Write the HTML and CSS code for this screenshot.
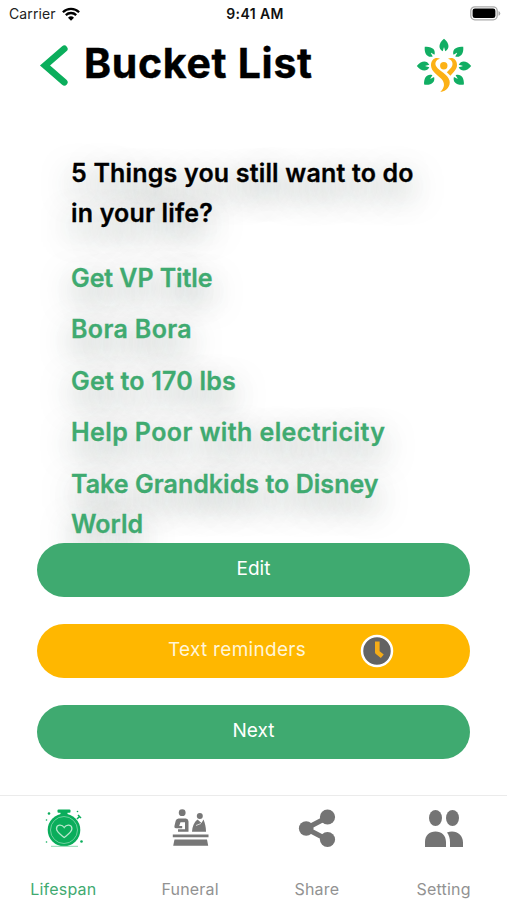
FILE: index.html
```html
<!DOCTYPE html>
<html lang="en">
<head>
<meta charset="utf-8">
<title>Bucket List</title>
<link rel="stylesheet" href="styles.css">
</head>
<body>
<div class="status">
  <div class="carrier"><span>Carrier</span>
    <svg width="18" height="14" viewBox="0 0 18 14" fill="none" stroke="#000" stroke-width="2.3"><path d="M.9 5.200a11.600 11.600 0 0 1 16.200 0M3.800 8.100a7.500 7.500 0 0 1 10.400 0"/><path d="M9 13.800 6 10.800a4.300 4.300 0 0 1 6 0z" fill="#000" stroke="none"/></svg>
  </div>
  <span class="time">9:41 AM</span>
  <svg class="battery" width="31" height="15" viewBox="0 0 31 15"><rect x=".8" y=".8" width="26.4" height="13" rx="4" fill="#fff" stroke="#aaa" stroke-width="1.3"/><rect x="2.6" y="2.5" width="22.8" height="9.6" rx="2.3"/><path d="M28.500 5v4.800q1.800-.8 1.800-2.400T28.500 5" fill="#aaa"/></svg>
</div>
<header class="header">
  <svg class="back" width="30" height="42" viewBox="0 0 30 42" fill="none" stroke="#0bae5c" stroke-width="6.6" stroke-linecap="round" stroke-linejoin="miter"><path d="M25.300 3.800 6 20.500 25.300 37.300"/></svg>
  <h1>Bucket List</h1>
  <svg class="logo" width="56" height="56" viewBox="0 0 56 56">
    <defs><path id="leaf" d="M0-27.200C-5.800-22.500-5.800-17-1.200-14.700L-.2-18.500h.4L1.200-14.700C5.800-17 5.800-22.500 0-27.200z" fill="#11ae63"/></defs>
    <g transform="translate(28 28)"><use href="#leaf"/><use href="#leaf" transform="rotate(-45)"/><use href="#leaf" transform="rotate(45)"/><use href="#leaf" transform="rotate(-90)"/><use href="#leaf" transform="rotate(90)"/><use href="#leaf" transform="rotate(-133)"/><use href="#leaf" transform="rotate(133)"/></g>
    <circle cx="27.800" cy="27.800" r="3.700" fill="#fcb116"/>
    <path d="M24 20.800C20 18.500 14.800 21 15 27.500c.3 6 5.500 8.500 10 13 4.200 4.200 4 9-.7 13.500 6.500-.8 10.500-6 9.200-11.500-1.700-6.500-10.300-9.500-13.200-14-2-3.300-.3-7 3.700-7.700z" fill="#fcb116"/>
    <path d="M32 20.800c3.700.7 5.300 4 4.200 7-.8 2.300-3.600 4.500-5.400 6.500l3.600 3.500c3-3.500 6.400-6.300 6.600-10.300.3-6.500-5-9-9-6.700z" fill="#fcb116"/>
  </svg>
</header>
<main class="goals">
  <h2><span>5 Things you still want to do</span><br><span>in your life?</span></h2>
  <ul>
    <li class="g1">Get VP Title</li>
    <li class="g2">Bora Bora</li>
    <li class="g3">Get to 170 lbs</li>
    <li class="g4">Help Poor with electricity</li>
    <li class="g5">Take Grandkids to Disney<br>World</li>
  </ul>
</main>
<div class="actions">
  <button class="btn">Edit</button>
  <button class="btn remind"><span>Text reminders</span>
    <svg class="clock" width="34" height="34" viewBox="0 0 34 34"><circle cx="17" cy="17" r="15" fill="#636363" stroke="#fff" stroke-width="2.500"/><path d="M17.300 7.500V18.300l5 4" fill="none" stroke="#f4ac18" stroke-width="4.600" stroke-linejoin="round"/></svg>
  </button>
  <button class="btn">Next</button>
</div>
<nav class="tabs">
  <a class="tab active">
    <svg width="42" height="42" viewBox="0 0 42 42" fill="#0aad5b"><rect x="15.500" y="1.500" width="13" height="3.200" rx="1"/><rect x="18.500" y="4" width="7" height="4"/><path d="m35 11 3-3m-2-1 3 3" stroke="#0aad5b" stroke-width="1.500"/><circle cx="22" cy="22" r="16.300"/><circle cx="22" cy="22" r="13.500" fill="none" stroke="#6fcf9e" stroke-width="1"/><path d="M22.200 29.500c-3-2.500-7.700-5.500-7.700-8.800 0-4.500 5.500-4.500 7.700-1.200 2.200-3.300 7.700-3.300 7.700 1.200 0 3.300-4.700 6.300-7.700 8.800z" fill="none" stroke="#b5e8cc" stroke-width="1.300"/><circle cx="7" cy="5.500" r="1.300"/><circle cx="4.500" cy="12" r=".8"/><circle cx="35.500" cy="3.500" r=".8"/><circle cx="39.500" cy="33.500" r="1.300"/><circle cx="4.500" cy="34" r=".8"/><path d="M9 38.300h27" stroke="#8cd8af"/></svg>
    <span>Lifespan</span>
  </a>
  <a class="tab">
    <svg width="42" height="42" viewBox="0 0 42 42" fill="#777"><circle cx="13.200" cy="4.700" r="3.400"/><path d="M9.500 10.500h7.500q2.500.3 2.500 3v10.200H9v-2.500h7v-7h-4.500L10.200 18h3v2.200H7q-2 0-1.500-2.500l1.200-5q.6-2 2.800-2.200z"/><circle cx="30.800" cy="8" r="3"/><path d="M28.500 11.500 32.500 15l2-3.500c1.500 3.500 2.500 7.500 2.500 12.200H23c.3-5.200 2-9.500 5.500-12.200z"/><path d="m27 17.500 5-2" stroke="#fff" stroke-width=".7"/><path d="M3.800 26.500h35.700v2.700H3.800zM5.500 31.500h32.500l1.200 6.300h-35z"/></svg>
    <span>Funeral</span>
  </a>
  <a class="tab">
    <svg width="42" height="42" viewBox="0 0 42 42" fill="#747474"><path d="M10 20.500 32 9M10 20.500 32 32" stroke="#747474" stroke-width="5"/><circle cx="10.200" cy="20.500" r="7.300"/><circle cx="31.500" cy="9" r="7.600"/><circle cx="31.500" cy="31.500" r="7.600"/></svg>
    <span>Share</span>
  </a>
  <a class="tab">
    <svg width="42" height="42" viewBox="0 0 42 42" fill="#747474"><ellipse cx="12.500" cy="10" rx="6.500" ry="8"/><ellipse cx="29.500" cy="10" rx="6.500" ry="8"/><path d="M2 39V34C2 27.500 6.500 23.500 12.500 23.500S23 27.500 23 34v5zM24 24.500c8-3 16 1.500 16 10V39H27V34.500c0-4-1-7.500-3-10z"/></svg>
    <span>Setting</span>
  </a>
</nav>
</body>
</html>
```
FILE: styles.css
```css
* { box-sizing: border-box; }
body { margin: 0; width: 507px; height: 900px; overflow: hidden; background: #fff; font-family: Inter, "Liberation Sans", sans-serif; display: flex; flex-direction: column; }
h1, h2, ul { margin: 0; padding: 0; }
ul { list-style: none; }
.status { height: 27px; padding: 0 6px 0 9px; display: grid; grid-template-columns: 1fr auto 1fr; align-items: center; font-size: 14px; color: #222; }
.carrier { display: flex; gap: 6px; align-items: center; letter-spacing: 0.1px; }
.time { font-weight: 600; letter-spacing: 0.4px; color: #111; }
.battery { justify-self: end; }
.header { height: 81px; display: flex; align-items: flex-start; padding: 17px 35px 0 39px; }
.back { margin-top: 1px; }
h1 { margin: -6px 0 0 15px; font-size: 41px; line-height: 50px; font-weight: 700; letter-spacing: 0.7px; white-space: nowrap; -webkit-text-stroke: 0.4px currentColor; }
.logo { margin: -6px 0 0 auto; }
.goals { height: 435px; padding: 44.5px 0 0 71px; font-size: 25px; line-height: 40px; font-weight: 600; white-space: nowrap; -webkit-text-stroke: 0.3px currentColor; }
h2 { font-size: 25px; font-weight: 600; height: 80px; letter-spacing: 0.18px; }
.goals h2, .goals li { text-shadow: 0 12px 30px rgba(40, 65, 55, 0.55); }
.goals ul { margin-top: 25px; display: flex; flex-direction: column; gap: 11.6px; color: #3faa70; }
.g1 { letter-spacing: -0.08px; }
.g2 { letter-spacing: 0.35px; }
.g3 { letter-spacing: 0.22px; }
.g4 { letter-spacing: 0.4px; }
.g5 { letter-spacing: 0.04px; }
.actions { position: relative; display: flex; flex-direction: column; gap: 27px; padding: 0 37px; }
.btn { height: 54px; border: 0; border-radius: 27px; background: #3faa70; color: #fff; font: 400 19px/24px Inter, sans-serif; padding: 0 0 3px; text-align: center; position: relative; }
.remind { background: #ffb700; padding-right: 33px; color: #fff5d8; letter-spacing: 0.3px; }
.clock { position: absolute; left: 323px; top: 9.5px; }
.tabs { margin-top: auto; height: 105px; border-top: 1px solid #ebebeb; display: grid; grid-template-columns: repeat(4, 1fr); }
.tab { display: flex; flex-direction: column; align-items: center; justify-content: space-between; padding: 12px 0 1px; font-size: 16px; line-height: 20px; color: #929292; letter-spacing: 0.2px; }
.active { color: #3faa70; }
```
